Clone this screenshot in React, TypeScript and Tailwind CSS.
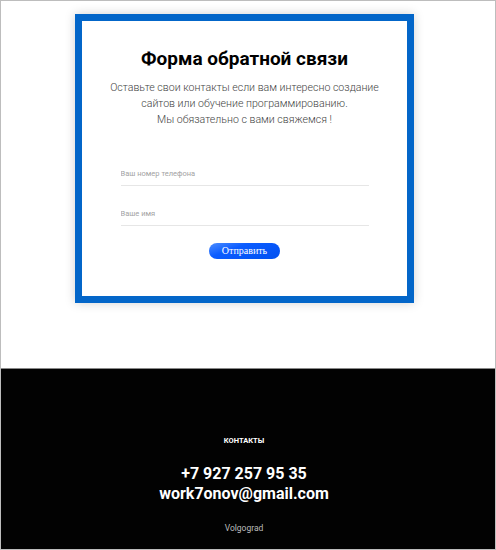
import React from "react";

const App = () => {
  return (
    <div className="w-[496px] h-[550px] border border-[#bdbdbd] flex flex-col bg-white font-['Roboto',sans-serif]">
      {/* Form section */}
      <div className="h-[367px] pt-[13px]">
        <div className="ml-[74px] w-[339px] h-[289px] border-[7px] border-[#0366c9] bg-white shadow-[0_0_10px_rgba(0,0,0,0.18)] flex flex-col items-center pt-[26px]">
          <h1 className="text-[19px] leading-[24px] font-bold text-black">Форма обратной связи</h1>
          <p className="mt-[9px] text-[10.6px] leading-[16px] font-light text-[#444] text-center">
            Оставьте свои контакты если вам интересно создание
            <br />
            сайтов или обучение программированию.
            <br />
            Мы обязательно с вами свяжемся !
          </p>
          <div className="mt-[34px] w-[248px] flex flex-col gap-[16px]">
            <input
              type="text"
              placeholder="Ваш номер телефона"
              className="h-[24px] border-b border-[#e6e6e6] text-[7.5px] outline-none placeholder:text-[#a3a3a3]"
            />
            <input
              type="text"
              placeholder="Ваше имя"
              className="h-[24px] border-b border-[#e6e6e6] text-[7.5px] outline-none placeholder:text-[#a3a3a3]"
            />
          </div>
          <button className="mt-[17px] w-[71px] h-[16px] rounded-full bg-[linear-gradient(160deg,#4d8dff_0%,#0b5cff_35%,#0050f0_100%)] text-white text-[10px] leading-[16px] font-['Liberation_Serif',serif]">
            Отправить
          </button>
        </div>
      </div>

      {/* Footer */}
      <div className="flex-1 bg-[#020202] border-t border-[#888] flex flex-col items-center text-white pr-[8px]">
        <div className="mt-[66px] text-[7.5px] font-bold">КОНТАКТЫ</div>
        <div className="mt-[18px] text-[16px] leading-[20px] font-bold text-center">
          +7 927 257 95 35
          <br />
          work7onov@gmail.com
        </div>
        <div className="mt-[18px] text-[8.5px] text-[#bbb]">Volgograd</div>
      </div>
    </div>
  );
};

export default App;
